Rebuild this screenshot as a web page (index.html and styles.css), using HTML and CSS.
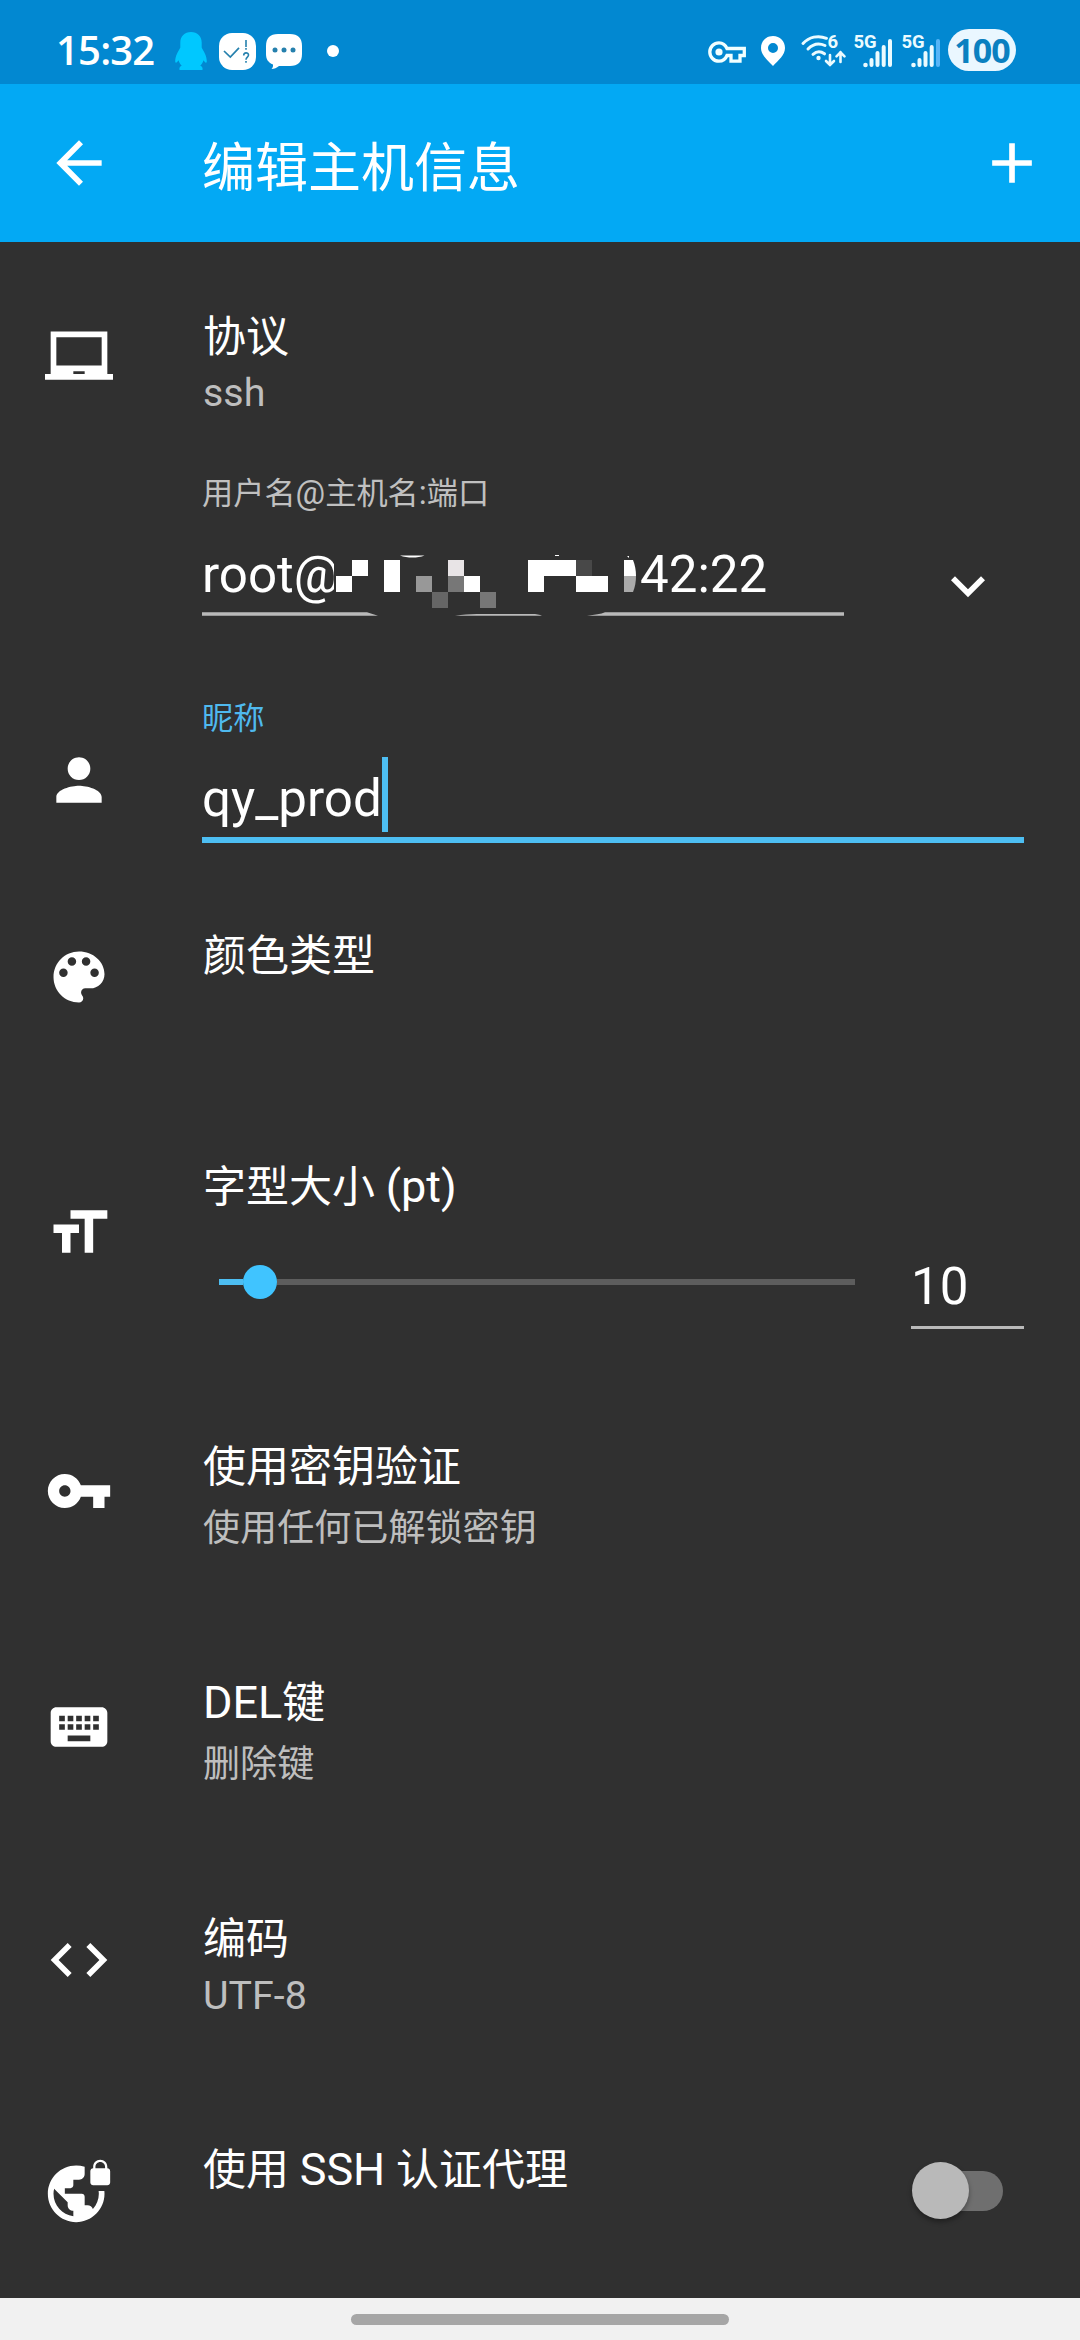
FILE: index.html
```html
<!DOCTYPE html>
<html lang="zh-CN">
<head>
<meta charset="utf-8">
<title>编辑主机信息</title>
<link rel="stylesheet" href="styles.css">
</head>
<body>
<div class="screen">
  <div class="status">
    <div class="status-left">
      <span class="clock">15:32</span>
      <svg class="penguin" width="32" height="38" viewBox="0 0 32 38"><path fill="#00c8ff" d="M16 0C9.500 0 5.300 4.600 5.300 10.500v5C3.500 19 0 24 .2 29.500c.3 2 1.700 1.300 3.300-1.200.6 2.300 1.700 4 3.200 5.500-1.600.7-2.700 1.700-2.200 4.200h23c.5-2.500-.6-3.500-2.200-4.200 1.500-1.500 2.600-3.200 3.200-5.500 1.600 2.500 3 3.200 3.300 1.200C32 24 28.500 19 26.700 15.500v-5C26.700 4.600 22.500 0 16 0z"/></svg>
      <svg class="quiz" width="37" height="37" viewBox="0 0 37 37"><rect width="37" height="37" rx="13" fill="#fff"/><path d="M5 18l6.300 6L20 14.800" fill="none" stroke="#2580ad" stroke-width="1.700"/><path d="M27 7v7M27 15v1.700M24.700 22.500c0-3.600 4.800-3.300 4.800-.4 0 2-2.500 2-2.500 4.600M27 28v1.800" fill="none" stroke="#2580ad" stroke-width="1.600"/></svg>
      <svg class="chat" width="36" height="37" viewBox="0 0 36 37"><path fill="#fff" d="M12 1h12c8 0 12 4 12 12v8c0 8-4 12-12 12H13c-2.500 2-4.500 3-7.500 3 1.300-1.400 1.700-2.600 1.500-4.500C2 29.500 0 26 0 21v-8C0 5 4 1 12 1z"/><g fill="#2580ad"><circle cx="9" cy="17" r="2.500"/><circle cx="18" cy="17" r="2.500"/><circle cx="27" cy="17" r="2.500"/></g></svg>
      <span class="more-dot"></span>
    </div>
    <div class="status-right">
      <svg class="vpn" width="38" height="22" viewBox="0 0 38 22"><path d="M19 7.500C17.500 4 14.500 1.800 11 1.800a9.200 9.200 0 0 0 0 18.400c3.500 0 6.500-2.200 8-5.700h4v5.700h9v-5.700h4.300v-7z" fill="none" stroke="#f2ffff" stroke-width="3.300"/><circle cx="11" cy="11" r="3.600" fill="#f2ffff"/></svg>
      <svg class="pin" width="24" height="30" viewBox="0 0 24 30"><path fill="#fff" fill-rule="evenodd" d="M12 0C5 0 0 5.200 0 12c0 7 6.500 12 12 18 5.500-6 12-11 12-18C24 5.200 19 0 12 0zm0 7a5 5 0 1 1 0 10 5 5 0 0 1 0-10z"/></svg>
      <svg class="wifi" width="45" height="34" viewBox="0 0 45 34"><g fill="none" stroke="#ebfbff" stroke-width="3" stroke-linecap="round"><path d="M2 9.500C8 3 17 .8 25.500 4.300M7 15C12 9.800 18 8.800 24 11.500M12 20.300c3.500-3 8-3 11.500-.5"/><path stroke-width="2.600" d="M29 21v10m-4-4l4 4 4-4M39.500 28V18m-4 4.300l4-4 4 4"/></g><circle cx="17.500" cy="24" r="2.200" fill="#ebfbff"/><text x="26.500" y="14" class="tiny">6</text></svg>
      <svg class="signal" width="40" height="34" viewBox="0 0 40 34"><text x="-.5" y="14" class="tiny">5G</text><circle cx="11.500" cy="31" r="2.300" fill="#ebfbff"/><path d="M17.500 26v5M23.500 19v12M29.700 13v18M36 7v24" class="bars"/></svg>
      <svg class="signal last" width="40" height="34" viewBox="0 0 40 34"><text x="-.5" y="14" class="tiny">5G</text><circle cx="11.500" cy="31" r="2.300" fill="#ebfbff"/><path d="M17.500 26v5M23.500 19v12M29.700 13v18" class="bars"/><path d="M36 7v24" class="bars faded"/></svg>
      <span class="battery">100</span>
    </div>
  </div>

  <div class="appbar">
    <svg class="icon" viewBox="0 0 24 24"><path d="M20 11H7.830l5.590-5.590L12 4l-8 8 8 8 1.410-1.410L7.830 13H20v-2z"/></svg>
    <h1>编辑主机信息</h1>
    <svg class="icon add" viewBox="0 0 24 24"><path d="M19 13h-6v6h-2v-6H5v-2h6V5h2v6h6v2z"/></svg>
  </div>

  <main class="form">
    <section class="row protocol">
      <svg class="icon" viewBox="0 0 24 24"><path d="M22 18V3H2v15H0v2h24v-2h-2zm-8 0h-4v-1h4v1zm6-3H4V5h16v10z"/></svg>
      <div class="body"><div class="title">协议</div><div class="sub latin">ssh</div></div>
    </section>

    <section class="row host">
      <div class="body">
        <div class="label">用户名<span class="en">@</span>主机名<span class="en">:</span>端口</div>
        <div class="host-line">
          <div class="host-field">
            <div class="input"><span class="user">root@</span><svg class="mosaic" width="306" height="66" viewBox="334 542 306 66"><path fill="#303030" d="M334 542h14v66h-14z"/><path fill="#fff" d="M352 560h16v16h-16zM336 576h16v16h-16zM384 560h16v32h-16zM464 576h16v16h-16zM528 560h48v16h-32v16h-16zM576 576h32v16h-32zM624 560h9c2 5 3 10 3 16h-12zM400 555.500h24.500c-7 2.800-17 2.800-24.500 0zM555 555h4v1h-4zM627 556h2v2z"/><path fill="#e8e4e6" d="M448 560h16v16h-16z"/><path fill="#484848" d="M576 560h16v16h-16z"/><path fill="#989898" d="M416 576h16v16h-16z"/><path fill="#777" d="M448 576h16v16h-16zM480 592h16v16h-16z"/><path fill="#666" d="M432 592h16v16h-16z"/><path fill="#aaa" d="M624 576h12c0 6-1 11-3 16h-9z"/></svg><span>42:22</span></div>
            <svg class="broken-line" width="642" height="4" viewBox="0 0 642 4"><path fill="#b9b9b9" d="M0 .3h165l11 3.400H0zM253 3.700c8-.8 14-1.700 22-1.700h55c4 0 8 .6 10 1.700zM385 3.700c8-.8 14-1.500 18-3.400h239v3.400z"/></svg>
          </div>
          <svg class="icon chevron" viewBox="0 0 24 24"><path d="M7.410 8.590L12 13.170l4.590-4.580L18 10l-6 6-6-6z"/></svg>
        </div>
      </div>
    </section>

    <section class="row nick">
      <svg class="icon" viewBox="0 0 24 24"><path d="M12 12c2.210 0 4-1.790 4-4s-1.790-4-4-4-4 1.790-4 4 1.790 4 4 4zm0 2c-2.670 0-8 1.340-8 4v2h16v-2c0-2.660-5.330-4-8-4z"/></svg>
      <div class="body">
        <div class="label">昵称</div>
        <div class="input"><span>qy_prod</span><i class="caret"></i></div>
        <div class="focus-line"></div>
      </div>
    </section>

    <section class="row color">
      <svg class="icon" viewBox="0 0 24 24"><path d="M12 3c-4.970 0-9 4.030-9 9s4.030 9 9 9c.83 0 1.500-.67 1.500-1.500 0-.39-.15-.74-.39-1.010-.23-.26-.38-.61-.38-.99 0-.83.67-1.500 1.500-1.500H16c2.760 0 5-2.240 5-5 0-4.420-4.030-8-9-8zm-5.500 9c-.83 0-1.500-.67-1.500-1.500S5.670 9 6.500 9 8 9.670 8 10.500 7.330 12 6.500 12zm3-4C8.670 8 8 7.330 8 6.500S8.670 5 9.500 5s1.500.67 1.500 1.500S10.330 8 9.500 8zm5 0c-.83 0-1.500-.67-1.500-1.500S13.670 5 14.500 5s1.500.67 1.500 1.500S15.330 8 14.500 8zm3 4c-.83 0-1.500-.67-1.500-1.500S16.670 9 17.500 9s1.500.67 1.500 1.500-.67 1.500-1.500 1.500z"/></svg>
      <div class="body"><div class="title">颜色类型</div></div>
    </section>

    <section class="row size">
      <svg class="icon" viewBox="0 0 24 24"><path d="M9 4v3h5v12h3V7h5V4H9zm-6 8h3v7h3v-7h3V9H3v3z"/></svg>
      <div class="body">
        <div class="title">字型大小 <span class="en">(pt)</span></div>
        <div class="size-line">
          <div class="slider"><span class="filled"></span><span class="knob"></span><span class="rest"></span></div>
          <div class="size-value">10</div>
        </div>
      </div>
    </section>

    <section class="row key">
      <svg class="icon" viewBox="0 0 24 24"><path d="M12.650 10C11.830 7.670 9.610 6 7 6c-3.310 0-6 2.690-6 6s2.690 6 6 6c2.610 0 4.830-1.670 5.650-4H17v4h4v-4h2v-4H12.650zM7 14c-1.100 0-2-.9-2-2s.9-2 2-2 2 .9 2 2-.9 2-2 2z"/></svg>
      <div class="body"><div class="title">使用密钥验证</div><div class="sub">使用任何已解锁密钥</div></div>
    </section>

    <section class="row del">
      <svg class="icon" viewBox="0 0 24 24"><path d="M20 5H4c-1.100 0-1.990.9-1.990 2L2 17c0 1.100.9 2 2 2h16c1.100 0 2-.9 2-2V7c0-1.100-.9-2-2-2zm-9 3h2v2h-2V8zm0 3h2v2h-2v-2zM8 8h2v2H8V8zm0 3h2v2H8v-2zm-1 2H5v-2h2v2zm0-3H5V8h2v2zm9 7H8v-2h8v2zm0-4h-2v-2h2v2zm0-3h-2V8h2v2zm3 3h-2v-2h2v2zm0-3h-2V8h2v2z"/></svg>
      <div class="body"><div class="title"><span class="en">DEL</span>键</div><div class="sub">删除键</div></div>
    </section>

    <section class="row encoding">
      <svg class="icon" viewBox="0 0 24 24"><path d="M9.400 16.600L4.800 12l4.600-4.600L8 6l-6 6 6 6 1.400-1.400zm5.200 0l4.600-4.600-4.600-4.600L16 6l6 6-6 6-1.400-1.400z"/></svg>
      <div class="body"><div class="title">编码</div><div class="sub latin">UTF-8</div></div>
    </section>

    <section class="row agent">
      <svg class="icon" viewBox="0 0 24 24"><path d="M22 4v-.5C22 2.120 20.880 1 19.500 1S17 2.120 17 3.500V4c-.55 0-1 .45-1 1v4c0 .55.45 1 1 1h5c.55 0 1-.45 1-1V5c0-.55-.45-1-1-1zm-.8 0h-3.400v-.5c0-.94.76-1.700 1.700-1.700s1.700.76 1.700 1.700V4zm-2.280 8c.04.33.08.66.08 1 0 2.080-.8 3.970-2.100 5.390-.26-.81-1-1.390-1.900-1.390h-1v-3c0-.55-.45-1-1-1H7v-2h2c.55 0 1-.45 1-1V8h2c1.100 0 2-.9 2-2V3.460c-.95-.3-1.950-.46-3-.46C5.480 3 1 7.480 1 13s4.480 10 10 10 10-4.480 10-10c0-.34-.02-.67-.05-1h-2.030zM10 20.930c-3.950-.49-7-3.850-7-7.930 0-.62.08-1.210.21-1.790L8 16v1c0 1.100.9 2 2 2v1.930z"/></svg>
      <div class="body agent-body"><div class="title">使用 <span class="en">SSH</span> 认证代理</div><div class="switch"><span class="thumb"></span></div></div>
    </section>
  </main>

  <div class="navbar"><span class="pill"></span></div>
</div>
</body>
</html>
```
FILE: styles.css
```css
* { box-sizing: border-box; }

body {
  margin: 0;
  background: #303030;
  color: #fff;
  font-family: Roboto, "Noto Sans CJK SC", sans-serif;
}

.screen {
  width: 1080px;
  height: 2340px;
  display: flex;
  flex-direction: column;
  overflow: hidden;
}

svg { display: block; flex: none; }

/* status bar */
.status {
  height: 84px;
  background: #0288d1;
  display: flex;
  justify-content: space-between;
  padding: 0 64px 0 56px;
}
.status-left, .status-right { display: flex; align-items: flex-start; }
.clock {
  width: 119px;
  font: 600 40px/56px "Open Sans", sans-serif;
  letter-spacing: -0.8px;
  padding-top: 22px;
}
.penguin { margin: 32px 12px 0 0; }
.quiz { margin: 33px 10px 0 0; }
.chat { margin: 33px 25px 0 0; }
.more-dot { width: 12px; height: 12px; border-radius: 50%; background: #fff; margin-top: 45px; }
.vpn { margin: 41px 15px 0 0; }
.pin { margin: 36px 16px 0 0; }
.wifi { margin: 34px 8px 0 0; overflow: visible; }
.signal { margin: 34px 8px 0 0; overflow: visible; }
.signal.last { margin-right: 6px; }
.tiny { font: 700 18.5px Roboto, sans-serif; fill: #ebfbff; }
.bars { stroke: #ebfbff; stroke-width: 4; stroke-linecap: round; fill: none; }
.faded { stroke: #57b5f7; }
.battery {
  width: 68px;
  height: 42px;
  margin-top: 29px;
  border-radius: 21px;
  background: #eaf7ff;
  color: #0a80c0;
  font: 700 34px/42px "Open Sans", sans-serif;
  letter-spacing: -1px;
  text-align: center;
}

/* app bar */
.appbar {
  height: 158px;
  background: #03a9f4;
  display: flex;
  align-items: center;
  padding: 0 34px 0 45px;
}
.appbar h1 {
  flex: 1;
  margin: 0 0 0 89px;
  font-weight: 400;
  font-size: 53px;
  line-height: 70px;
  padding-top: 11px;
}

.icon { width: 68px; height: 68px; fill: #fff; }

/* form rows */
.form { flex: 1; display: flex; flex-direction: column; }
.row { display: flex; flex: none; padding-left: 45px; }
.body { margin-left: 89px; width: 822px; }
.title { font-size: 43px; line-height: 60px; white-space: nowrap; padding-left: 1px; }
.title .en { font-size: 45px; line-height: 1; }
.sub { font-size: 37.1px; line-height: 50px; margin-top: 7px; color: #bebebe; padding-left: 1px; }
.sub.latin { font-size: 39.4px; margin-top: 1px; }
.label { font-size: 31.2px; line-height: 44px; color: #c0c0c0; }
.label .en { font-size: 33px; line-height: 1; }
.input { display: flex; font-size: 51.1px; line-height: 66px; height: 66px; }

.protocol { height: 220px; padding-top: 65px; }
.protocol .icon { margin-top: 16px; }

.host { height: 224px; padding: 10px 0 0 113px; }
.host-line { display: flex; margin-top: 26px; }
.host-field { width: 642px; }
.user { width: 132px; }
.mosaic { position: relative; }
.broken-line { margin-top: 4px; }
.chevron { margin: 10px 0 0 90px; }

.nick { height: 210px; padding-top: 11px; }
.nick .icon { margin-top: 49px; }
.nick .label { color: #4fb9ee; }
.nick .input { margin-top: 25px; }
.caret { width: 6px; height: 75px; background: #4dbef2; margin-top: -9px; }
.focus-line { height: 6px; margin-top: 5px; background: #4dbef2; }

.color { height: 234px; padding-top: 30px; }
.color .icon { margin-top: 17px; }

.size { height: 280px; padding-top: 27px; }
.size .icon { margin-top: 42px; }
.size-line { display: flex; justify-content: space-between; padding-left: 17px; margin-top: 37px; }
.slider { display: flex; align-items: center; width: 636px; height: 56px; }
.filled { width: 24px; height: 6px; background: #4dbef2; }
.knob { width: 34px; height: 34px; border-radius: 50%; background: #40c4ff; }
.rest { flex: 1; height: 6px; background: #5d5d5d; }
.size-value {
  width: 113px;
  height: 75px;
  border-bottom: 3px solid #b9b9b9;
  font-size: 51.1px;
  line-height: 66px;
}

.key { height: 236px; padding-top: 27px; }
.key .icon { margin-top: 20px; }
.del { height: 236px; padding-top: 27px; }
.del .icon { margin-top: 20px; }
.encoding { height: 231px; padding-top: 27px; }
.encoding .icon { margin-top: 17px; }
.encoding .sub { margin-top: 2px; }
.agent { height: 185px; padding-top: 27px; }
.agent .icon { margin-top: 17px; }
.agent-body { display: flex; justify-content: space-between; }
.switch {
  width: 88px;
  height: 40px;
  margin: 31px 21px 0 0;
  border-radius: 20px;
  background: #6f6f6f;
}
.thumb {
  display: block;
  width: 57px;
  height: 57px;
  margin: -9px 0 0 -3px;
  border-radius: 50%;
  background: #b9b9b9;
  box-shadow: 0 3px 5px rgba(0, 0, 0, .35);
}

/* gesture bar */
.navbar {
  flex: none;
  height: 42px;
  background: #f1f1f1;
  display: flex;
  justify-content: center;
  padding-top: 16px;
}
.pill { width: 378px; height: 11px; border-radius: 5.5px; background: #a6a6a6; }
```
